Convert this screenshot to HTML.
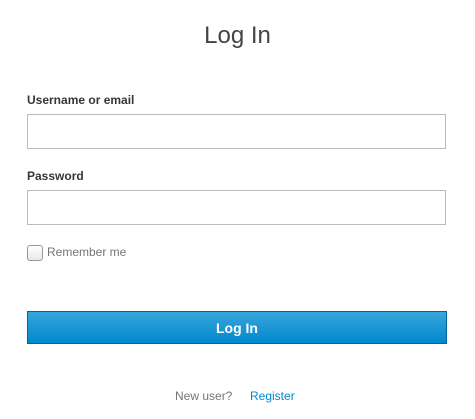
<!DOCTYPE html>
<html><head><style>
body{margin:0;width:475px;height:419px;background:#fff;font-family:"Liberation Sans",sans-serif;position:relative;overflow:hidden}
.a{position:absolute}
h1{position:absolute;left:0;width:475px;top:22px;margin:0;text-align:center;font-weight:300;font-size:24px;color:#444}
.lbl{font-size:12px;font-weight:bold;color:#363636;left:27px}
.inp{left:27px;width:417px;height:33px;border:1px solid #bbb;background:#fff}
.btn{left:27px;top:311px;width:418px;height:31px;border:1px solid #00659c;background:linear-gradient(#39a5dc,#0088ce);color:#fff;font-size:14px;font-weight:bold;text-align:center;line-height:32px}
</style></head><body>
<h1>Log In</h1>
<div class="a lbl" style="top:93px">Username or email</div>
<div class="a inp" style="top:114px"></div>
<div class="a lbl" style="top:169px">Password</div>
<div class="a inp" style="top:190px"></div>
<div class="a" style="left:27px;top:245px;width:14px;height:14px;border:1px solid #999;border-radius:3px;background:linear-gradient(#fff,#e8e8e8)"></div>
<div class="a" style="left:47px;top:245px;font-size:12px;color:#72767b">Remember me</div>
<div class="a btn">Log In</div>
<div class="a" style="left:175px;top:389px;font-size:12px;color:#72767b">New user?</div>
<div class="a" style="left:250px;top:389px;font-size:12px;color:#0088ce">Register</div>
</body></html>
